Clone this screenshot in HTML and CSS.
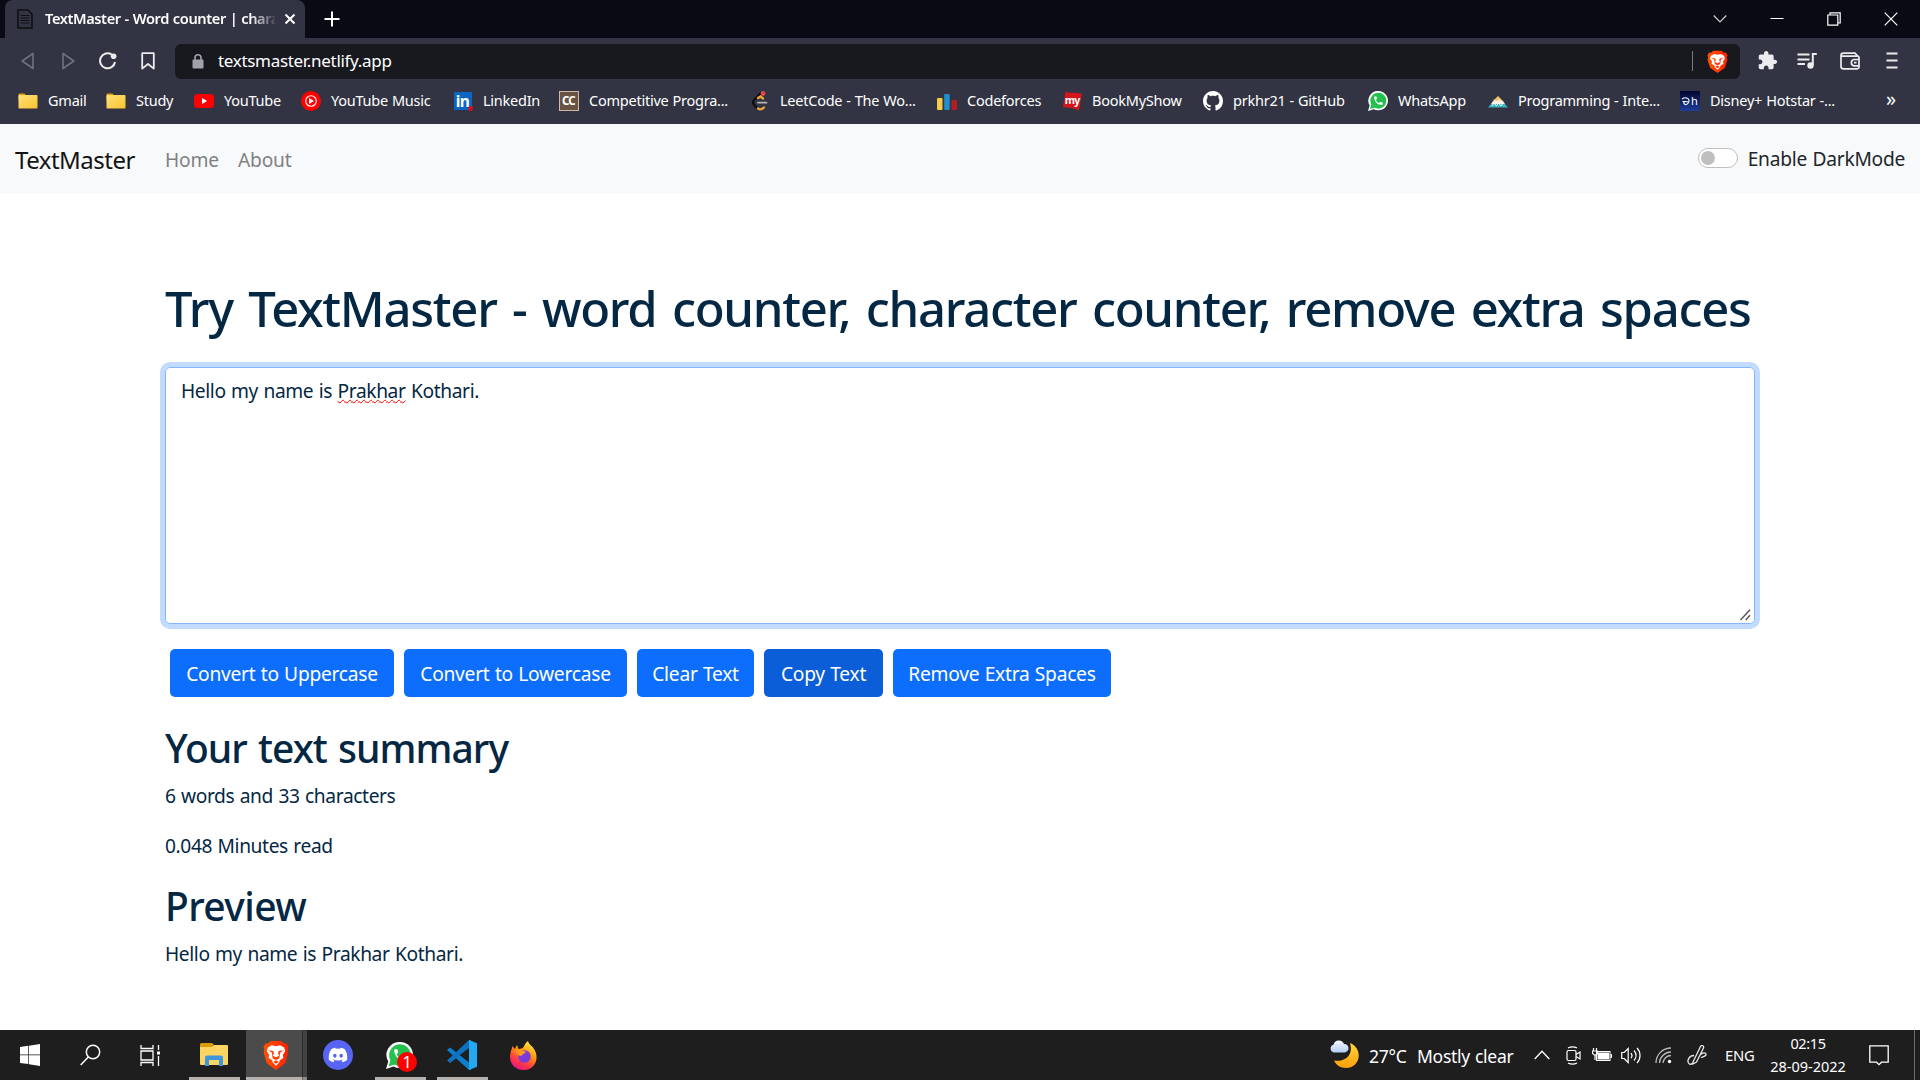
FILE: index.html
```html
<!DOCTYPE html>
<html lang="en">
<head>
<meta charset="utf-8">
<title>TextMaster</title>
<link rel="stylesheet" href="styles.css">
</head>
<body>
<svg class="defs" width="0" height="0">
  <defs>
    <linearGradient id="folderFill" x1="0" y1="0" x2="1" y2="1"><stop offset="0" stop-color="#ffe07a"/><stop offset="1" stop-color="#fbc42f"/></linearGradient>
    <linearGradient id="braveFill" x1="0" y1="0" x2="1" y2="0"><stop offset="0" stop-color="#ff5500"/><stop offset="1" stop-color="#ff2000"/></linearGradient>
    <linearGradient id="moonFill" x1="0" y1="0" x2="0" y2="1"><stop offset="0" stop-color="#ffd43b"/><stop offset="1" stop-color="#ff9f0a"/></linearGradient>
    <linearGradient id="cloudFill" x1="0" y1="0" x2="0" y2="1"><stop offset="0" stop-color="#f5f9ff"/><stop offset="1" stop-color="#b5cdf2"/></linearGradient>
    <linearGradient id="foxFill" x1=".8" y1="0" x2=".3" y2="1"><stop offset="0" stop-color="#fff44f"/><stop offset=".4" stop-color="#ff980e"/><stop offset=".75" stop-color="#ff3647"/><stop offset="1" stop-color="#e31587"/></linearGradient>
    <linearGradient id="starFill" x1="0" y1="0" x2="0" y2="1"><stop offset="0" stop-color="#03072e"/><stop offset="1" stop-color="#1e3c9a"/></linearGradient>
  </defs>
  <symbol id="folder" viewBox="0 0 20 16"><path d="M.5 1.500a1 1 0 0 1 1-1h5l1.500 2H19v4H.5z" fill="#e0a30e"/><rect x=".5" y="2" width="19" height="13.500" rx="1" fill="url(#folderFill)"/></symbol>
  <symbol id="lion" viewBox="0 0 24 28">
    <path d="M7 1h10l2.200 2.200L21.500 3l2 3.500-.8 2.500.7 2.500-2.900 10.200L12 28 3.500 21.700.6 11.500 1.300 9 .5 6.500 2.500 3l2.300.2z" fill="url(#braveFill)"/>
    <path d="M8.200 5l3.800.8 3.800-.8 3.700 2 1 3.200-2.200 3.800.5 2.800-3.300 2-.5 2.200-3 3-3-3-.5-2.200-3.300-2 .5-2.800-2.200-3.800 1-3.200z" fill="#fff"/>
    <path d="M4.800 9.500l4.700.7.6 2.300-1 2.200 2.900 1.300 2.900-1.300-1-2.200.6-2.300 4.700-.7-3.500 2.500-.3 3-.4 2.200-3 1.500-3-1.500-.4-2.200-.3-3zM9.500 20.500L12 19l2.500 1.500L12 22.200z" fill="#ff3c00"/>
    <path d="M10.500 6.500h3l-.5 8h-2z" fill="#fff"/>
  </symbol>
  <symbol id="phone" viewBox="0 0 24 24"><path d="M6.620 10.790c1.440 2.830 3.760 5.140 6.590 6.590l2.200-2.200c.27-.27.67-.36 1.020-.24 1.120.37 2.330.57 3.570.57.55 0 1 .45 1 1V20c0 .55-.45 1-1 1-9.390 0-17-7.610-17-17 0-.55.45-1 1-1h3.500c.55 0 1 .45 1 1 0 1.250.2 2.450.57 3.570.11.35.03.74-.25 1.020l-2.200 2.200z" fill="#fff"/></symbol>
  <symbol id="whatsapp" viewBox="0 0 30 30"><path d="M15.500 0a14.500 14.500 0 1 1-7 27.200L0 30l2.500-8.200A14.500 14.500 0 0 1 15.500 0z" fill="#fff"/><circle cx="15.500" cy="14.500" r="12" fill="#23c04e"/><path d="M3 27l2-7 5 5z" fill="#23c04e"/><use href="#phone" x="7" y="6" width="17" height="17"/></symbol>
</svg>

<header class="browser">
  <div class="tabstrip">
    <div class="tab">
      <svg class="favicon" width="16" height="20" viewBox="0 0 16 20" fill="none" stroke="#0e0f15" stroke-width="1.600"><path d="M1 1h10l4 4v14H1z"/><path d="M3.500 6.500h9M3.500 9h9M3.500 11.500h9M3.500 14h9" stroke-width="1"/></svg>
      <span class="tab-title">TextMaster - Word counter | chara</span>
      <svg width="12" height="12" viewBox="0 0 12 12" stroke="#fff" stroke-width="2"><path d="M1.500 1.500l9 9M10.500 1.500l-9 9"/></svg>
    </div>
    <svg class="new-tab" width="16" height="16" viewBox="0 0 16 16" stroke="#fff" stroke-width="2"><path d="M8 .5v15M.5 8h15"/></svg>
    <div class="window-controls">
      <svg width="14" height="14" viewBox="0 0 14 14" fill="none" stroke="#cfcfd2" stroke-width="1.200"><path d="M.7 3.500L7 10l6.300-6.500"/></svg>
      <svg width="14" height="14" viewBox="0 0 14 14" stroke="#fff" stroke-width="1"><path d="M.5 6.500h13"/></svg>
      <svg width="14" height="14" viewBox="0 0 14 14" fill="none" stroke="#fff" stroke-width="1.200"><path d="M.8 3h10v10.200H.8zM3 3V.8h10.200V11H11"/></svg>
      <svg width="14" height="14" viewBox="0 0 14 14" stroke="#fff" stroke-width="1.200"><path d="M.7.700l12.600 12.600M13.300.700L.7 13.300"/></svg>
    </div>
  </div>

  <div class="toolbar">
    <svg width="14" height="18" viewBox="0 0 14 18" fill="none" stroke="#6e707c" stroke-width="1.700" stroke-linejoin="round"><path d="M12 1.500v15L1.200 9z"/></svg>
    <svg width="14" height="18" viewBox="0 0 14 18" fill="none" stroke="#6e707c" stroke-width="1.700" stroke-linejoin="round"><path d="M2 1.500v15L12.800 9z"/></svg>
    <svg width="18" height="18" viewBox="0 0 18 18" fill="none" stroke="#ececee" stroke-width="2"><path d="M12.800 2.600A7.500 7.500 0 1 0 16 10"/><circle cx="14.600" cy="4.300" r="2.800" fill="#ececee" stroke="none"/></svg>
    <svg width="14" height="18" viewBox="0 0 14 18" fill="none" stroke="#ececee" stroke-width="1.800" stroke-linejoin="round"><path d="M1.200 1.200h11.600v15.400L7 12l-5.800 4.600z"/></svg>
    <div class="address">
      <svg width="12" height="15" viewBox="0 0 12 15"><rect x=".5" y="5.500" width="11" height="9" rx="1" fill="#a0a2ac"/><path d="M3 6V3.800a3 3 0 0 1 6 0V6" fill="none" stroke="#a0a2ac" stroke-width="1.600"/></svg>
      <span class="url">textsmaster.netlify.app</span>
      <span class="address-divider"></span>
      <svg width="21" height="23" viewBox="0 0 24 28" preserveAspectRatio="none"><use href="#lion" width="24" height="28"/></svg>
    </div>
    <svg width="21" height="21" viewBox="0 0 24 24" fill="#ececee"><path d="M20.500 11H19V7c0-1.100-.9-2-2-2h-4V3.500C13 2.120 11.880 1 10.500 1S8 2.120 8 3.500V5H4c-1.100 0-1.990.9-1.990 2v3.800H3.500c1.490 0 2.700 1.210 2.700 2.700s-1.210 2.700-2.700 2.700H2V20c0 1.100.9 2 2 2h3.800v-1.500c0-1.490 1.210-2.700 2.700-2.700 1.490 0 2.700 1.210 2.700 2.700V22H17c1.100 0 2-.9 2-2v-4h1.500c1.380 0 2.500-1.120 2.500-2.500S21.880 11 20.500 11z"/></svg>
    <svg width="20" height="18" viewBox="0 0 20 18" fill="none" stroke="#ececee" stroke-width="2"><path d="M.5 2.500h12M.5 7.500h12M.5 12h7.500M15.800 13V2h4"/><circle cx="13.500" cy="13.500" r="3.200" fill="#ececee" stroke="none"/></svg>
    <svg width="20" height="18" viewBox="0 0 20 18" fill="none" stroke="#ececee" stroke-width="1.700"><path d="M1 3.500A2.300 2.300 0 0 1 3.300 1.200H15l2.500 2.600a2 2 0 0 1 1.500 2V15a1.800 1.800 0 0 1-1.800 1.800H3.300A2.300 2.300 0 0 1 1 14.500zM1.500 4.200h16M19 7.500h-5a3.200 3.200 0 0 0 0 6.300h5M14 10.600h2.500"/></svg>
    <svg width="12" height="17" viewBox="0 0 12 17" stroke="#ececee" stroke-width="2"><path d="M.5 1.500h11M.5 8.500h11M.5 15.500h11"/></svg>
  </div>

  <nav class="bookmarks">
    <a><svg width="20" height="16"><use href="#folder"/></svg><span>Gmail</span></a>
    <a><svg width="20" height="16"><use href="#folder"/></svg><span>Study</span></a>
    <a><svg width="20" height="14" viewBox="0 0 20 14"><rect width="20" height="14" rx="3.500" fill="#f00"/><path d="M8 4l5.200 3L8 10z" fill="#fff"/></svg><span>YouTube</span></a>
    <a><svg width="20" height="20" viewBox="0 0 20 20"><circle cx="10" cy="10" r="10" fill="#f00"/><circle cx="10" cy="10" r="5.300" fill="none" stroke="#fff" stroke-width="1.100"/><path d="M8 7l5 3-5 3z" fill="#fff"/></svg><span>YouTube Music</span></a>
    <a><svg width="19" height="20" viewBox="0 0 19 20"><rect y="1" width="18" height="18" rx="1" fill="#0a66c2"/><text x="1.800" y="16" class="glyph" font-size="15.500">in</text><circle cx="16.500" cy="17.500" r="2.500" fill="#d11124"/></svg><span>LinkedIn</span></a>
    <a><svg width="20" height="20" viewBox="0 0 20 20"><rect x=".5" y=".5" width="19" height="19" fill="#6b5344" stroke="#cdb9a7"/><text x="3" y="13.500" class="glyph" font-size="11.500">CC</text></svg><span>Competitive Progra...</span></a>
    <a><svg width="20" height="20" viewBox="0 0 20 20" fill="none" stroke-linecap="round" stroke-width="2.300"><path d="M10.500 2.500L4 9a3 3 0 0 0 0 4.500l3 3.500" stroke="#0c0c0c"/><path d="M8 7l2.500-1.500L13 7.500M8 17.500c2.500 1.800 4 1 6-1" stroke="#f0a63a"/><path d="M8 11.700h8.500" stroke="#b3b3b3" stroke-width="1.800"/><circle cx="13" cy="2.500" r="2.400" fill="#e0484d"/></svg><span>LeetCode - The Wo...</span></a>
    <a><svg width="20" height="20" viewBox="0 0 20 20"><rect y="7" width="5.500" height="12" rx="1" fill="#f7c948"/><rect x="7.200" y="3" width="5.500" height="16" rx="1" fill="#1f8fd0"/><rect x="14.500" y="9" width="5.500" height="10" rx="1" fill="#b11e26"/></svg><span>Codeforces</span></a>
    <a><svg width="20" height="20" viewBox="0 0 20 20"><path d="M3.500.500l3 1 13.500 1-3 17-5-2-11-1.500z" fill="#d4151c"/><text x="2.800" y="12.500" class="glyph" font-size="10.500">my</text></svg><span>BookMyShow</span></a>
    <a><svg width="20" height="20" viewBox="0 0 16 16" fill="#fff"><path d="M8 0C3.580 0 0 3.580 0 8c0 3.540 2.290 6.530 5.470 7.590.4.070.55-.17.55-.38 0-.19-.01-.82-.01-1.490-2.010.37-2.530-.49-2.690-.94-.09-.23-.48-.94-.82-1.130-.28-.15-.68-.52-.01-.53.63-.01 1.080.58 1.230.82.72 1.210 1.870.87 2.330.66.070-.52.28-.87.51-1.070-1.780-.2-3.640-.89-3.640-3.950 0-.87.31-1.590.82-2.150-.08-.2-.36-1.020.08-2.120 0 0 .67-.21 2.200.82.64-.18 1.320-.27 2-.27s1.360.09 2 .27c1.530-1.040 2.200-.82 2.200-.82.44 1.100.16 1.920.08 2.120.51.56.82 1.270.82 2.150 0 3.070-1.870 3.750-3.650 3.950.29.25.54.73.54 1.480 0 1.070-.01 1.930-.01 2.200 0 .21.15.46.55.38A8.010 8.010 0 0 0 16 8c0-4.420-3.580-8-8-8z"/></svg><span>prkhr21 - GitHub</span></a>
    <a><svg width="20" height="20"><use href="#whatsapp"/></svg><span>WhatsApp</span></a>
    <a><svg width="20" height="20" viewBox="0 0 20 20"><path d="M10 5l5 5H5z" fill="#f5c16c"/><path d="M5 10h10l2 3H3z" fill="#f4ede0"/><path d="M3 13h14l3 3.500H0z" fill="#3fb3bd"/><path d="M6 8.500l3 3 2-3 3 3M4 15l2-3 2.500 3 2-3 2.500 3 2-3" fill="none" stroke="#fff" stroke-width=".9"/></svg><span>Programming - Inte...</span></a>
    <a><svg width="20" height="20" viewBox="0 0 20 20"><rect width="20" height="20" fill="url(#starFill)"/><path d="M2 8c3-2 7-1.500 7 2s-4 4.500-5 2.500 2-2.500 4-1.500M2.500 10.500h3" fill="none" stroke="#fff" stroke-width="1.100"/><text x="11" y="14" class="glyph thin" font-size="11">h</text></svg><span>Disney+ Hotstar -...</span></a>
    <span class="more">»</span>
  </nav>
</header>

<nav class="navbar">
  <span class="brand">TextMaster</span>
  <a class="nav-link">Home</a>
  <a class="nav-link">About</a>
  <label class="dark-toggle"><span class="switch"></span><span class="toggle-label">Enable DarkMode</span></label>
</nav>

<main class="container">
  <h1>Try TextMaster - word counter, character counter, remove extra spaces</h1>
  <div class="editor">Hello my name is <span class="misspelled">Prakhar</span> Kothari.
    <svg class="grip" width="11" height="12" viewBox="0 0 11 12" stroke="#555" stroke-width="1.400"><path d="M.5 11L10 .7M5.700 11l4.300-4.700"/></svg>
  </div>
  <div class="actions">
    <button>Convert to Uppercase</button>
    <button>Convert to Lowercase</button>
    <button>Clear Text</button>
    <button class="active">Copy Text</button>
    <button>Remove Extra Spaces</button>
  </div>
  <h2>Your text summary</h2>
  <p>6 words and 33 characters</p>
  <p>0.048 Minutes read</p>
  <h2>Preview</h2>
  <p>Hello my name is Prakhar Kothari.</p>
</main>

<footer class="taskbar">
  <div class="apps">
    <span class="app"><svg width="20" height="22" viewBox="0 0 20 22" fill="#fff"><path d="M0 3l8.300-1.200v8.700H0zM9 1.700L20 0v10.500H9zM0 11.300h8.300V20L0 18.900zM9 11.300h11V22L9 20.300z"/></svg></span>
    <span class="app"><svg width="21" height="22" viewBox="0 0 21 22" fill="none" stroke="#fff" stroke-width="1.500"><circle cx="13" cy="8" r="6.700"/><path d="M8.300 13L.7 21"/></svg></span>
    <span class="app task-view"><svg width="21" height="21" viewBox="0 0 21 21" fill="none" stroke="#fff" stroke-width="1.300"><path d="M1 0v3.500h12V0M1 21v-3.500h12V21M1 6h12v9H1zM18.500 0v5M18.500 11v10"/><rect x="17" y="6.500" width="3" height="3" fill="#fff" stroke="none"/></svg></span>
    <span class="app open"><svg width="28" height="24" viewBox="0 0 28 24"><path d="M0 1.500A1.500 1.500 0 0 1 1.500 0H12l2 2-2 3H0z" fill="#dc9a08"/><path d="M0 4h12l2-2h13a1 1 0 0 1 1 1v18a1 1 0 0 1-1 1H1a1 1 0 0 1-1-1z" fill="#fcd462"/><path d="M5 23V14.500a2 2 0 0 1 2-2h14a2 2 0 0 1 2 2V23h-4v-6H9v6z" fill="#3f96d8"/></svg></span>
    <span class="app open current"><svg width="26" height="30" viewBox="0 0 24 28" preserveAspectRatio="none"><use href="#lion" width="24" height="28"/></svg></span>
    <span class="app"><svg width="30" height="30" viewBox="0 0 30 30"><circle cx="15" cy="15" r="15" fill="#5865f2"/><svg x="5.500" y="5.500" width="19" height="19" viewBox="0 0 24 24" fill="#fff"><path d="M20.317 4.370a19.791 19.791 0 0 0-4.885-1.515.074.074 0 0 0-.079.037c-.21.375-.444.864-.608 1.250a18.270 18.270 0 0 0-5.487 0 12.640 12.640 0 0 0-.617-1.250.077.077 0 0 0-.079-.037A19.736 19.736 0 0 0 3.677 4.370a.07.07 0 0 0-.032.027C.533 9.046-.32 13.580.099 18.057a.082.082 0 0 0 .031.057 19.900 19.900 0 0 0 5.993 3.030.078.078 0 0 0 .084-.028c.462-.63.874-1.295 1.226-1.994a.076.076 0 0 0-.041-.106 13.107 13.107 0 0 1-1.872-.892.077.077 0 0 1-.008-.128 10.200 10.200 0 0 0 .372-.292.074.074 0 0 1 .077-.01c3.928 1.793 8.180 1.793 12.062 0a.074.074 0 0 1 .078.010c.12.098.246.198.373.292a.077.077 0 0 1-.006.127 12.299 12.299 0 0 1-1.873.892.077.077 0 0 0-.041.107c.36.698.772 1.362 1.225 1.993a.076.076 0 0 0 .084.028 19.839 19.839 0 0 0 6.002-3.030.077.077 0 0 0 .032-.054c.5-5.177-.838-9.674-3.549-13.660a.061.061 0 0 0-.031-.03zM8.020 15.330c-1.183 0-2.157-1.085-2.157-2.419 0-1.333.956-2.419 2.157-2.419 1.210 0 2.176 1.096 2.157 2.420 0 1.333-.956 2.418-2.157 2.418zm7.975 0c-1.183 0-2.157-1.085-2.157-2.419 0-1.333.955-2.419 2.157-2.419 1.210 0 2.176 1.096 2.157 2.420 0 1.333-.946 2.418-2.157 2.418z"/></svg></svg></span>
    <span class="app open"><svg class="chat" width="27" height="27"><use href="#whatsapp"/></svg><span class="badge">1</span></span>
    <span class="app open"><svg width="30" height="30" viewBox="0 0 30 30"><path d="M0 10l3-2.500L24 24v6h-2z" fill="#0a7fd0"/><path d="M0 20.500L22 0h2v7L3 23z" fill="#0f70bd"/><path d="M22 0l8 3.300v23.400L22 30z" fill="#23a9f2"/><path d="M22 8v14l-9-7z" fill="#1e1e1f"/></svg></span>
    <span class="app"><svg width="28" height="29" viewBox="0 0 28 29"><path d="M18 0c1 4 4 4.500 6 8 6 9 1 21-10 21S-1.500 20 .5 12C1 9 2 8 2.500 5l2.300 3L7 4l1.500 4 3-.5c3-.5 2-4 6.500-7.500z" fill="url(#foxFill)"/><circle cx="14.500" cy="15.500" r="6.300" fill="#7a3bd9"/><path d="M5 10c5-2.500 7 .5 11 .5-1 3-4 2-4.500 4.500-2.500 0-4.500-2-6.500-5z" fill="#ff9a1f"/></svg></span>
  </div>
  <div class="tray">
    <svg width="30" height="30" viewBox="0 0 30 30"><path d="M20 3c14 6 10 25-4 25-6 0-10-3-12-7.500 10 2 20-5 16-17.500z" fill="url(#moonFill)"/><path d="M4 12.500a4 4 0 0 1-.5-7.800A5.500 5.500 0 0 1 14 4a4.200 4.200 0 0 1 .5 8.500z" fill="url(#cloudFill)"/></svg>
    <span class="weather">27°C</span>
    <span class="weather">Mostly clear</span>
    <svg width="16" height="10" viewBox="0 0 16 10" fill="none" stroke="#fff" stroke-width="1.300"><path d="M.7 9L8 1.300 15.300 9"/></svg>
    <svg width="15" height="19" viewBox="0 0 15 19" fill="none" stroke="#fff" stroke-width="1.200"><rect x="1" y="4.500" width="9" height="10" rx="1.500"/><path d="M10 8.500l4-2.500v7l-4-2.500M2 2c3-1.500 6-1.500 9 0M2 17c3 1.500 6 1.500 9 0"/></svg>
    <svg width="20" height="14" viewBox="0 0 20 14" fill="none" stroke="#fff"><rect x="4.500" y="3.500" width="13.500" height="9"/><rect x="6" y="5" width="10.500" height="6" fill="#fff"/><path d="M19.300 6v4" stroke-width="1.400"/><path d="M1.500 0v3M4.500 0v3M.5 3h5v2.500L3 7.500.5 5.500zM3 7v5" stroke-width="1.200"/></svg>
    <svg width="21" height="19" viewBox="0 0 21 19" fill="none" stroke="#fff" stroke-width="1.200"><path d="M.7 6.500h2.500l4-4v14l-4-4H.7zM10 7a4 4 0 0 1 0 5M13 4.500c2.500 3 2.500 7 0 10M16 2c4 4 4 11 0 15"/></svg>
    <svg width="17" height="17" viewBox="0 0 17 17" fill="none" stroke="#bbb" stroke-width="1.300"><path d="M1 16A15 15 0 0 1 16 1M4.500 16A11.500 11.500 0 0 1 16 5M8 16a8 8 0 0 1 8-7.500"/><circle cx="14.500" cy="14.500" r="1.700" fill="#fff" stroke="none"/></svg>
    <svg width="21" height="22" viewBox="0 0 21 22" fill="none" stroke="#e8e8e8" stroke-width="1.300"><path d="M6 18L13.500 2.500a1.600 1.600 0 0 1 3 1.500L9.500 18 6 20zM7 11.500c-5 0-7 5-5.500 7.500s4.500 1 5-2M13 11c3-3 6-2.500 6-.5s-3 2-5 3"/></svg>
    <span class="lang">ENG</span>
    <div class="clock"><span class="time">02:15</span><span>28-09-2022</span></div>
    <svg width="20" height="21" viewBox="0 0 20 21" fill="none" stroke="#fff" stroke-width="1.300"><path d="M.8.800h18.400v16.400h-6.700L10 19.700l-2.500-2.500H.8z"/></svg>
    <span class="show-desktop"></span>
  </div>
</footer>
</body>
</html>
```
FILE: styles.css
```css
* { box-sizing: border-box; }

body {
  margin: 0;
  width: 1920px;
  height: 1080px;
  overflow: hidden;
  display: flex;
  flex-direction: column;
  background: #fff;
  color: #042743;
  font: 19.2px/30px "Noto Sans", sans-serif;
  letter-spacing: -0.38px;
  word-spacing: 0.8px;
}

svg { display: block; flex: none; }
.defs { position: absolute; }
.glyph { fill: #fff; font-family: "Noto Sans", sans-serif; font-weight: 700; letter-spacing: -0.8px; }
.thin { font-weight: 400; }

/* Browser window */
.browser { height: 124px; background: #323443; color: #fff; }

.tabstrip {
  display: flex;
  align-items: center;
  height: 38px;
  padding-left: 5px;
  background: #0a0a14;
}
.tab {
  display: flex;
  align-items: center;
  width: 300px;
  height: 38px;
  padding: 0 10px 0 12px;
  border-radius: 8px 8px 0 0;
  background: #323443;
}
.tab-title {
  width: 230px;
  margin: -2px 9px 0 12px;
  white-space: nowrap;
  font-size: 14.6px;
  font-weight: 600;
  letter-spacing: -0.4px;
  word-spacing: 0.5px;
  -webkit-mask-image: linear-gradient(90deg, #000 205px, transparent 233px);
  mask-image: linear-gradient(90deg, #000 205px, transparent 233px);
}
.new-tab { margin-left: 19px; }
.window-controls {
  display: grid;
  grid-template-columns: 57px 57px 57px 58px;
  justify-items: center;
  margin: -1px 0 0 auto;
}

.toolbar {
  display: grid;
  grid-template-columns: 40px 40px 40px 39px 1581px 39px 39px 48px 36px;
  align-items: center;
  justify-items: center;
  height: 45px;
  padding: 0 0 0 8px;
}
.address {
  display: flex;
  align-items: center;
  width: 1565px;
  height: 35px;
  margin-top: 1px;
  padding: 0 12px 0 17px;
  border-radius: 6px;
  background: #17191f;
}
.url { margin: 0 auto 0 14px; font-size: 17px; letter-spacing: -0.31px; }
.address-divider { width: 1px; height: 20px; margin-right: 14px; background: #7a7b81; }

.bookmarks {
  display: grid;
  grid-template-columns: 88px 88px 107px 153px 105px 191px 187px 125px 141px 165px 120px 192px 206px auto;
  align-items: center;
  height: 36px;
  padding-left: 18px;
  font-size: 14.5px;
  letter-spacing: -0.24px;
  word-spacing: 0.5px;
  white-space: nowrap;
}
.bookmarks a { display: flex; align-items: center; gap: 10px; }
.bookmarks span { margin-top: -2px; }
.bookmarks .more { margin-top: -5px; font-size: 20px; }

/* Site navbar */
.navbar {
  display: flex;
  align-items: center;
  height: 70px;
  padding: 0 15px;
  background: #f8f9fa;
}
.brand { width: 150px; margin-top: 2px; color: #141414; font-size: 24px; letter-spacing: -0.5px; }
.nav-link { width: 73px; margin-top: 1px; color: #808182; letter-spacing: -0.2px; }
.dark-toggle {
  display: flex;
  align-items: center;
  gap: 10px;
  height: 30px;
  margin: -2px 0 0 auto;
  color: #212529;
  letter-spacing: -0.26px;
}
.toggle-label { margin-top: 2px; }
.switch {
  width: 40px;
  height: 20px;
  padding: 2px;
  border: 1px solid #bfbfbf;
  border-radius: 10px;
  background: #fff;
}
.switch::before {
  content: "";
  display: block;
  width: 14px;
  height: 14px;
  border-radius: 50%;
  background: #bfbfbf;
}

/* Page content */
.container { width: 1590px; height: 836px; margin: 0 auto; padding-top: 84px; }
h1, h2 { font-weight: 500; white-space: nowrap; }
h1 { margin: 0 0 29px; font-size: 49px; line-height: 60px; letter-spacing: -1.28px; word-spacing: 4px; }
h2 { margin: 0 0 9px; font-size: 39px; line-height: 48px; letter-spacing: -0.95px; word-spacing: 2px; }
p { margin: 0 0 20px; }
p + h2 { margin-top: 21px; letter-spacing: -0.6px; }

.editor {
  position: relative;
  height: 257px;
  padding: 8px 15px;
  border: 1px solid #86b7fe;
  border-radius: 5px;
  box-shadow: 0 0 0 5px #c2dbfe;
}
.misspelled {
  text-decoration: underline wavy #f00 1px;
  text-decoration-skip-ink: none;
  text-underline-offset: 1px;
}
.grip { position: absolute; right: 3px; bottom: 2px; }

.actions {
  display: grid;
  grid-template-columns: 224px 223px 117px 119px 218px;
  gap: 10px;
  margin: 25px 0 27px 5px;
}
button {
  height: 48px;
  padding: 2px 0 0;
  border: 0;
  border-radius: 5px;
  background: #0d6efd;
  color: #fff;
  font: inherit;
  letter-spacing: -0.25px;
  word-spacing: 0.6px;
  white-space: nowrap;
}
button.active { background: #0b5ed7; }

/* Windows taskbar */
.taskbar {
  display: flex;
  justify-content: space-between;
  height: 50px;
  background: #1e1e1f;
  color: #fff;
}
.apps { display: grid; grid-template-columns: 60px 60px 63px repeat(6, 62px); }
.app { position: relative; display: flex; align-items: center; justify-content: center; }
.task-view { padding-right: 3px; }
.open::after {
  content: "";
  position: absolute;
  left: 6px;
  right: 5px;
  bottom: 0;
  height: 3px;
  background: #b5b1af;
}
.current { background: linear-gradient(90deg, transparent 1px, #4b4b4b 1px 57px, #2c2c2c 57px 58px, #414141 58px); }
.current::after { left: 1px; right: 0; background: linear-gradient(90deg, #b5b1af 56px, #666 56px 57px, #8b8987 57px); }
.chat { margin-right: 1px; }
.badge {
  position: absolute;
  left: 28px;
  top: 22px;
  width: 20px;
  height: 20px;
  border-radius: 50%;
  background: #f00;
  text-align: center;
  font-size: 17px;
  line-height: 20px;
}

.tray {
  display: grid;
  grid-template-columns: 39px 48px 117px 32px 26px 29px 34px 32px 38px 40px 86px 18px 45px 6px;
  align-items: center;
  white-space: nowrap;
}
.weather { padding-top: 2px; font-size: 17.5px; letter-spacing: -0.28px; }
.lang { font-size: 14.8px; letter-spacing: -0.2px; }
.clock {
  display: flex;
  flex-direction: column;
  align-items: center;
  font-size: 14.5px;
  line-height: 23px;
  letter-spacing: 0;
}
.time { letter-spacing: -0.4px; }
.clock + svg { grid-column: 13; }
.show-desktop { height: 50px; border-left: 1px solid #6b6b6b; }
```
